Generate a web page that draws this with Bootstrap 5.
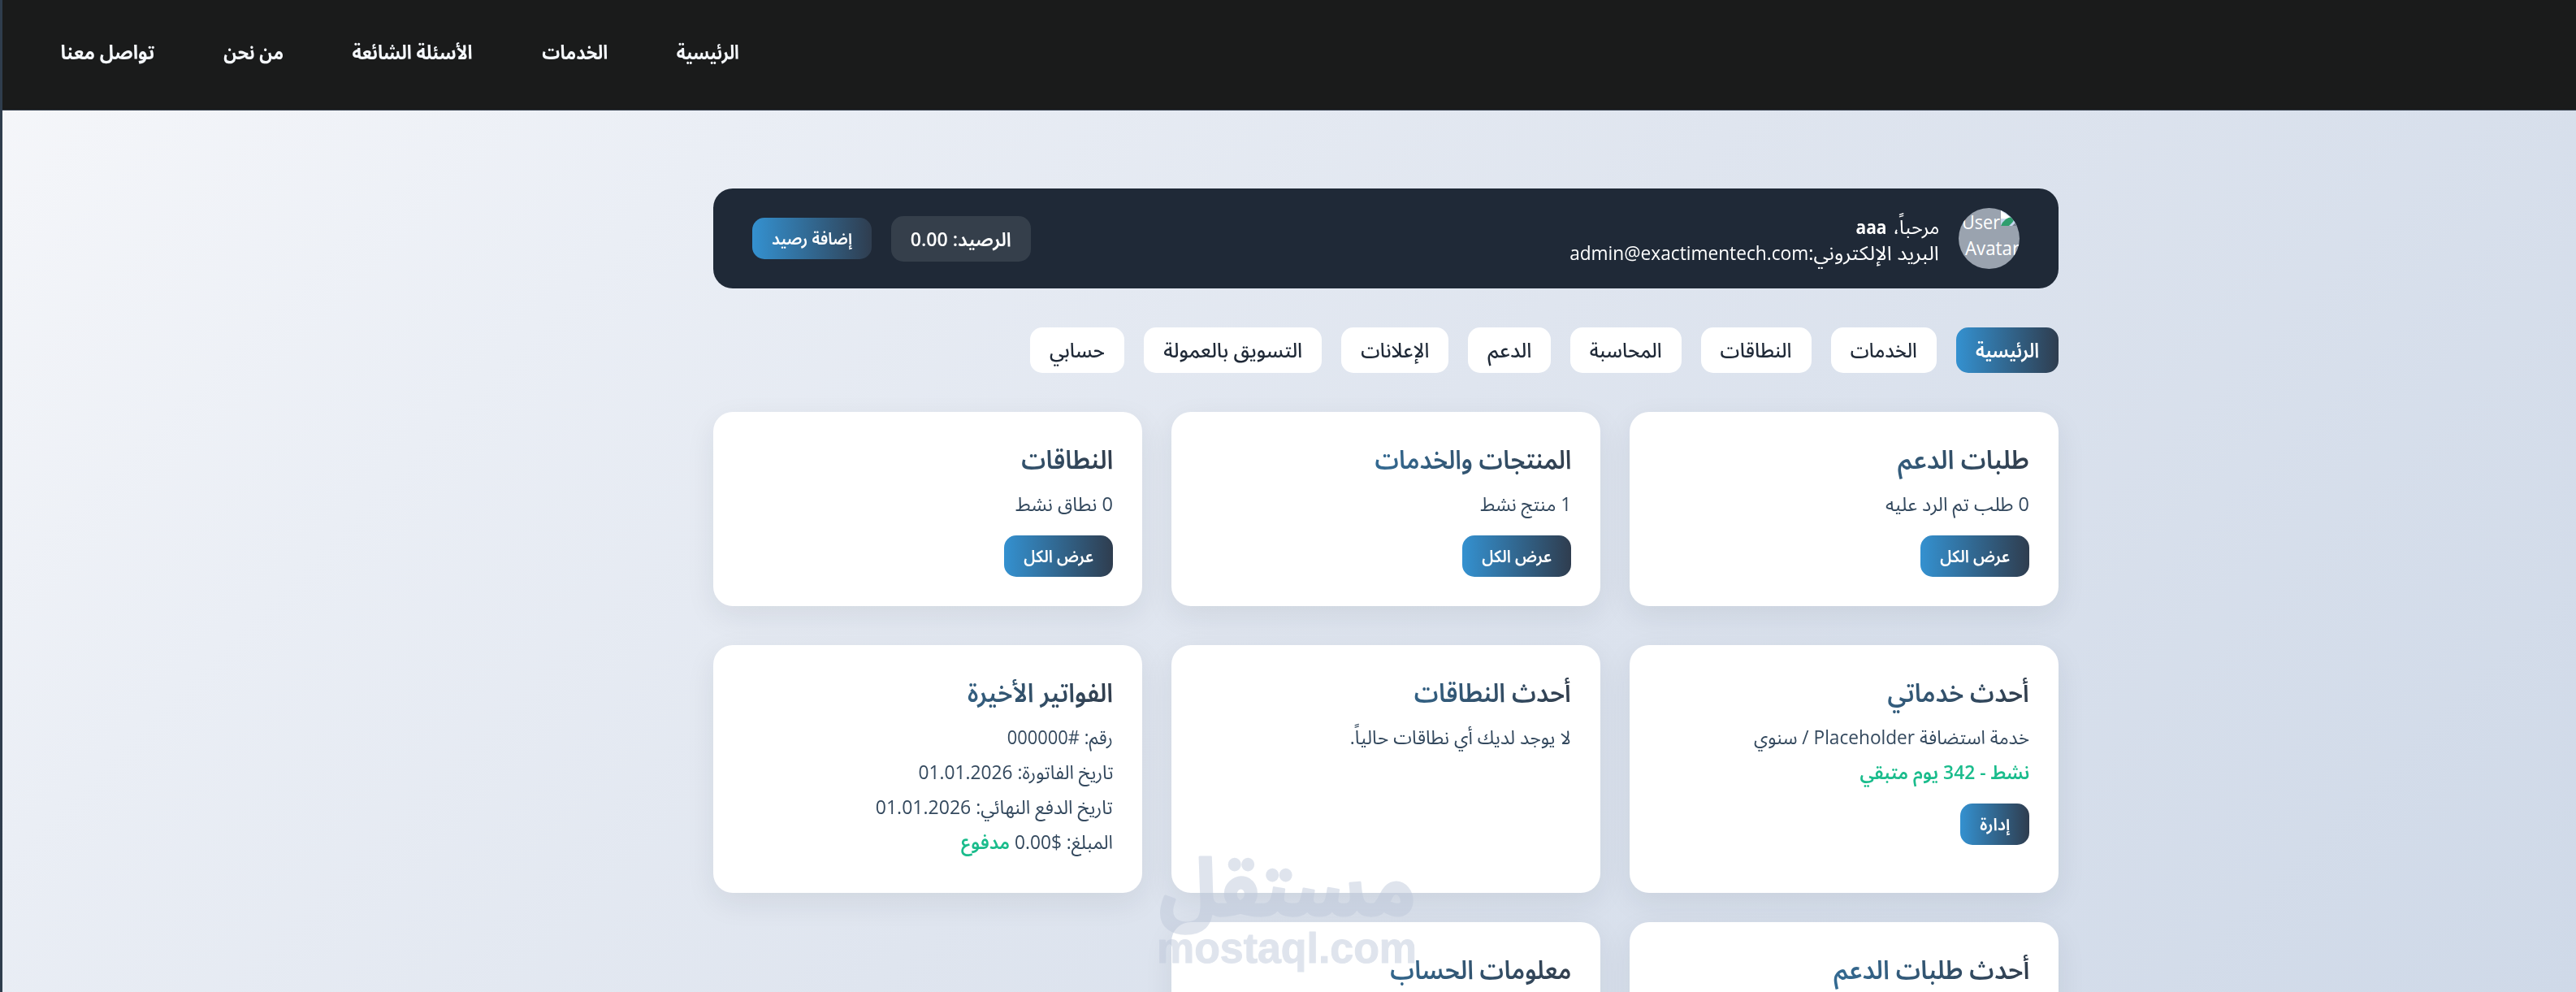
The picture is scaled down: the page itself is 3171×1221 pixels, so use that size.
<!DOCTYPE html>
<html lang="ar" dir="rtl">
<head>
<meta charset="utf-8">
<title>لوحة التحكم</title>
<link rel="stylesheet" href="https://cdn.jsdelivr.net/npm/bootstrap@5.3.0/dist/css/bootstrap.min.css">
<style>
html,body{height:1221px;overflow:hidden}
body{font-family:"Open Sans","Noto Sans Arabic","DejaVu Sans",sans-serif;color:#1f2937;background:linear-gradient(135deg,#f6f7fa 0%,#eaeef5 24%,#dfe5ef 52%,#cfd9e8 100%);font-size:24px}
.site-page{height:1221px;border-left:3px solid #2f3d4d;overflow:hidden}
.top-bar{height:136px;background:#1a1b1b;border-bottom:1px solid #36404e;padding-left:71px;padding-bottom:7px;direction:ltr}
.top-links{gap:85px;direction:rtl}
.top-links a{color:#f5f8fc;font-weight:700;text-decoration:none}
.fit-box{display:inline-block;white-space:nowrap;text-align:right}
.fit-box>span{display:inline-block;transform-origin:right center;direction:rtl}
.panel-wrap{width:1656px;margin:96px 637px 0 auto}
.user-bar{height:123px;background:#1f2937;border-radius:24px;padding:0 48px;color:#fff}
.avatar-pic{width:75px;height:75px;border-radius:50%;background:#9aa3af;overflow:hidden;flex:none}
.avatar-pic svg{display:block}
.user-text{line-height:32px;font-size:24px;padding-top:2px}
.balance-pill{height:56px;border-radius:15px;background:#353f4b;font-weight:600;padding:0 24px}
.grad-btn{height:51px;border-radius:15px;border:0;color:#fff;font-size:21px;font-weight:600;padding:0 24px;background:linear-gradient(90deg,#3491d0,#2f3d4f)}
.tab-row{gap:24px;margin-top:48px}
.tab-link{height:56px;border-radius:15px;background:#fff;color:#1f2937;font-size:25px;font-weight:500;padding:0 24px;text-decoration:none}
.tab-link.active{background:linear-gradient(90deg,#3491d0,#2f3d4f);color:#fff;font-weight:600}
.tile-grid{display:grid;grid-template-columns:repeat(3,528px);gap:36px;margin-top:48px}
.tile{background:#fff;border-radius:24px;padding:36px;box-shadow:0 12px 36px rgba(31,41,55,.08)}
.tile-tall{height:305px}
.tile h3{font-size:32px;font-weight:600;line-height:44px;height:56px;margin:0;white-space:nowrap;transform-origin:right center;background:linear-gradient(90deg,#3491d0,#323e4d);-webkit-background-clip:text;background-clip:text;color:transparent}
.tile p{font-size:23.2px;line-height:43px;height:43px;margin:0;color:#34495e}
.tile .grad-btn{margin-top:17px}
.ok-text{color:#1abc8c!important;font-weight:600}
.brand-mark{position:absolute;left:1410px;top:1035px;pointer-events:none}
</style>
</head>
<body>
<div class="site-page">
<header class="top-bar d-flex align-items-center">
<nav class="top-links d-flex">
<a href="#" data-w="77">الرئيسية</a><a href="#" data-w="81">الخدمات</a><a href="#" data-w="148">الأسئلة الشائعة</a><a href="#" data-w="74">من نحن</a><a href="#" data-w="116">تواصل معنا</a>
</nav>
</header>
<main class="panel-wrap">
<section class="user-bar d-flex align-items-center justify-content-between">
<div class="d-flex align-items-center gap-4">
<div class="avatar-pic"><svg width="75" height="75" viewBox="0 0 75 75" direction="ltr"><text x="4" y="26" font-size="23" fill="#fff" textLength="47" lengthAdjust="spacingAndGlyphs">User</text><text x="8" y="58" font-size="23" fill="#fff" textLength="67" lengthAdjust="spacingAndGlyphs">Avatar</text><path d="M52 3H75V22H52Z" fill="#c6d8ee"/><path d="M52 3L64 12Q58 14 52 13Z" fill="#fff"/><path d="M52 22Q56 12 66 11Q70 14 66 18L62 22Z" fill="#2f9e6e"/><path d="M66 22L75 13V22Z" fill="#78808c"/></svg></div>
<div class="user-text d-flex flex-column align-items-start">
<div class="d-flex gap-2"><span data-w="57">مرحباً،</span><b data-w="38">aaa</b></div>
<div class="d-flex"><span data-w="161">البريد الإلكتروني:</span><span data-w="294">admin@exactimentech.com</span></div>
</div>
</div>
<div class="d-flex align-items-center gap-4">
<div class="balance-pill d-flex align-items-center"><span data-w="124">الرصيد: 0.00</span></div>
<button class="grad-btn"><span data-w="99">إضافة رصيد</span></button>
</div>
</section>
<nav class="tab-row d-flex">
<a class="tab-link active d-flex align-items-center" href="#"><span data-w="78">الرئيسية</span></a>
<a class="tab-link d-flex align-items-center" href="#"><span data-w="82">الخدمات</span></a>
<a class="tab-link d-flex align-items-center" href="#"><span data-w="88">النطاقات</span></a>
<a class="tab-link d-flex align-items-center" href="#"><span data-w="89">المحاسبة</span></a>
<a class="tab-link d-flex align-items-center" href="#"><span data-w="54">الدعم</span></a>
<a class="tab-link d-flex align-items-center" href="#"><span data-w="84">الإعلانات</span></a>
<a class="tab-link d-flex align-items-center" href="#"><span data-w="171">التسويق بالعمولة</span></a>
<a class="tab-link d-flex align-items-center" href="#"><span data-w="68">حسابي</span></a>
</nav>
<section class="tile-grid">
<article class="tile"><h3 data-t="162">طلبات الدعم</h3><p><span data-w="177">0 طلب تم الرد عليه</span></p><button class="grad-btn"><span data-w="86">عرض الكل</span></button></article>
<article class="tile"><h3 data-t="242">المنتجات والخدمات</h3><p><span data-w="112">1 منتج نشط</span></p><button class="grad-btn"><span data-w="86">عرض الكل</span></button></article>
<article class="tile"><h3 data-t="113">النطاقات</h3><p><span data-w="120">0 نطاق نشط</span></p><button class="grad-btn"><span data-w="86">عرض الكل</span></button></article>
</section>
<section class="tile-grid">
<article class="tile tile-tall"><h3 data-t="174">أحدث خدماتي</h3><p><span data-w="339">خدمة استضافة Placeholder / سنوي</span></p><p class="ok-text"><span data-w="209">نشط - 342 يوم متبقي</span></p><button class="grad-btn"><span data-w="37">إدارة</span></button></article>
<article class="tile tile-tall"><h3 data-t="193">أحدث النطاقات</h3><p><span data-w="272">لا يوجد لديك أي نطاقات حالياً.</span></p></article>
<article class="tile tile-tall"><h3 data-t="179">الفواتير الأخيرة</h3><p><span data-w="130">رقم: <bdi dir="ltr">000000#</bdi></span></p><p><span data-w="240">تاريخ الفاتورة: 01.01.2026</span></p><p><span data-w="292">تاريخ الدفع النهائي: 01.01.2026</span></p><p><span data-w="187">المبلغ: <bdi dir="ltr">0.00$</bdi> <b class="ok-text">مدفوع</b></span></p></article>
<article class="tile tile-tall"><h3 data-t="241">أحدث طلبات الدعم</h3></article>
<article class="tile tile-tall"><h3 data-t="223">معلومات الحساب</h3></article>
</section>
</main>
<svg class="brand-mark" width="350" height="186" viewBox="0 0 350 186" direction="ltr"><g opacity=".48" fill="#bec8da" stroke="#bec8da" stroke-linejoin="round"><text x="333" y="92" direction="rtl" text-anchor="start" font-family="Noto Sans Arabic, DejaVu Sans, sans-serif" font-weight="700" font-size="98" stroke-width="3" textLength="316" lengthAdjust="spacingAndGlyphs">مستقل</text><text x="14" y="150" font-family="Liberation Sans, sans-serif" font-weight="700" font-size="51" stroke-width="1" textLength="320" lengthAdjust="spacingAndGlyphs">mostaql.com</text></g></svg>
</div>
<script src="https://cdn.jsdelivr.net/npm/bootstrap@5.3.0/dist/js/bootstrap.bundle.min.js"></script>
<script>
document.querySelectorAll('[data-w]').forEach(el=>{
  const w=+el.dataset.w, inner=document.createElement('span');
  while(el.firstChild) inner.appendChild(el.firstChild);
  el.appendChild(inner); el.classList.add('fit-box');
  const n=inner.getBoundingClientRect().width;
  el.style.width=w+'px'; inner.style.transform=`scaleX(${w/n})`; inner.style.marginLeft=(w-n)+'px';
});
document.querySelectorAll('[data-t]').forEach(el=>{
  const r=document.createRange(); r.selectNodeContents(el);
  const s=el.dataset.t/r.getBoundingClientRect().width;
  el.style.width=456/s+'px'; el.style.transform=`scaleX(${s})`;
});
</script>
</body>
</html>
